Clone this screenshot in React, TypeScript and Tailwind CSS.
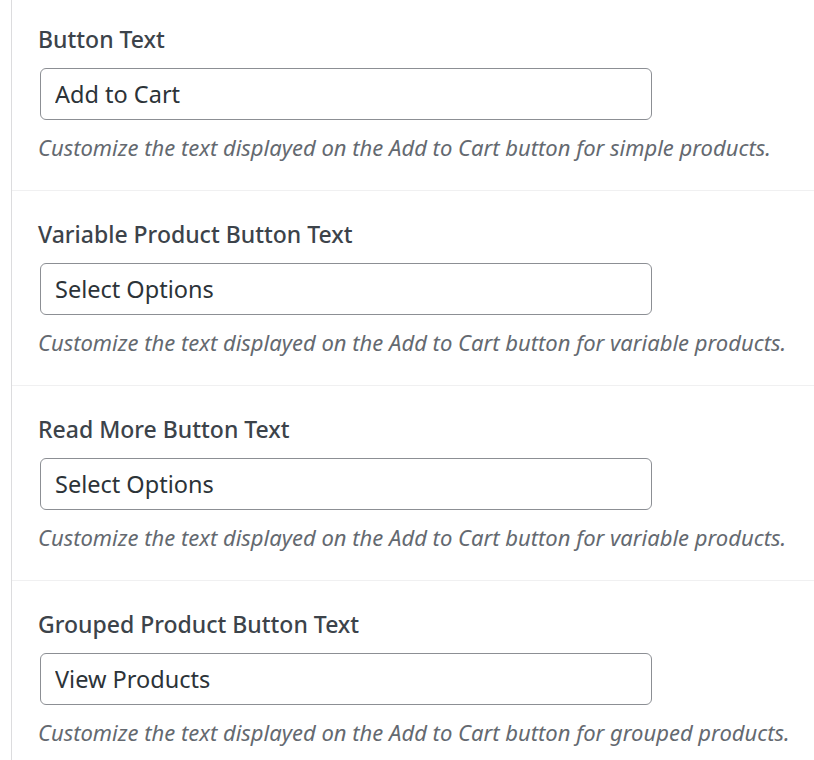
import { useState } from "react";

type Field = {
    id: string;
    label: string;
    value: string;
    help: string;
};

const fields: Field[] = [
    {
        id: "simple",
        label: "Button Text",
        value: "Add to Cart",
        help: "Customize the text displayed on the Add to Cart button for simple products.",
    },
    {
        id: "variable",
        label: "Variable Product Button Text",
        value: "Select Options",
        help: "Customize the text displayed on the Add to Cart button for variable products.",
    },
    {
        id: "readmore",
        label: "Read More Button Text",
        value: "Select Options",
        help: "Customize the text displayed on the Add to Cart button for variable products.",
    },
    {
        id: "grouped",
        label: "Grouped Product Button Text",
        value: "View Products",
        help: "Customize the text displayed on the Add to Cart button for grouped products.",
    },
];

const SettingRow = ({ field, first }: { field: Field; first: boolean }) => {
    const [value, setValue] = useState(field.value);

    return (
        <div
            className={`flex flex-col pl-[26px] pb-[28px] border-b border-[#f0f0f1] ${first ? "pt-[24px]" : "pt-[28px]"}`}
        >
            <label
                htmlFor={field.id}
                className="text-[23px] leading-[30px] font-[550] text-[#3c434a]"
            >
                {field.label}
            </label>
            <input
                id={field.id}
                type="text"
                value={value}
                onChange={({ target: { value } }) => setValue(value)}
                className="mt-[14px] ml-[2px] w-[612px] h-[52px] px-[14px] rounded-[6px] border border-[#8c8f94] bg-white text-[23.5px] text-[#2c3338] focus:outline-none"
            />
            <p className="mt-[12px] text-[22px] leading-[30px] italic text-[#646970] whitespace-nowrap">
                {field.help}
            </p>
        </div>
    );
};

const App = () => {
    return (
        <section
            className="w-[814px] h-[760px] overflow-hidden bg-white"
            style={{ fontFamily: '"Noto Sans", "Open Sans", sans-serif' }}
        >
            <div className="ml-[11px] border-l border-[#dcdcde] min-h-full">
                {fields.map((field, i) => (
                    <SettingRow key={field.id} field={field} first={i === 0} />
                ))}
            </div>
        </section>
    );
};

export default App;
